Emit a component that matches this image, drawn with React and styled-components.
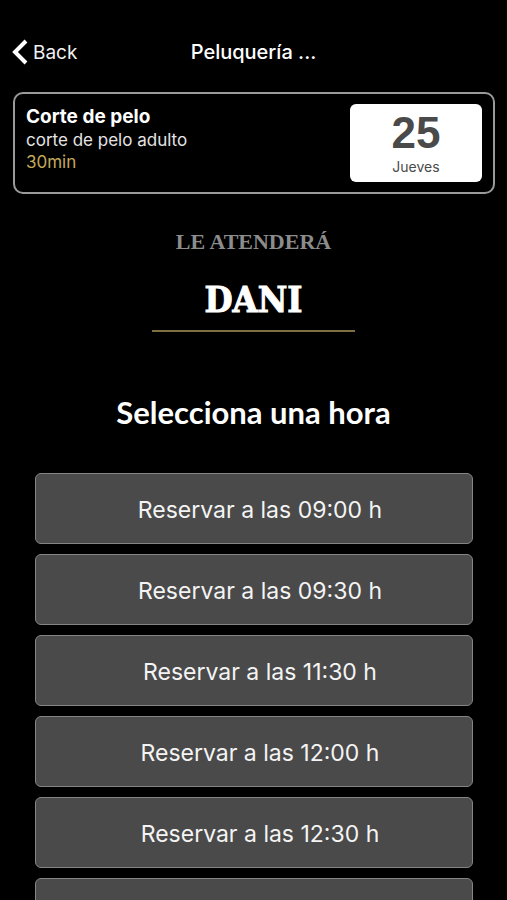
import React, { useState } from "react";
import styled, { createGlobalStyle } from "styled-components";

const hours = ["09:00", "09:30", "11:30", "12:00", "12:30", "13:00"];

const App = () => {
  const [selected, setSelected] = useState(null);

  return (
    <Screen>
      <GlobalStyle />
      <Header>
        <BackButton type="button">
          <BackIcon viewBox="0 0 16 26" aria-hidden="true">
            <path d="M14 2 L3 13 L14 24" />
          </BackIcon>
          Back
        </BackButton>
        <Title>Peluquería ...</Title>
      </Header>
      <ServiceCard>
        <div>
          <ServiceName>Corte de pelo</ServiceName>
          <ServiceText>corte de pelo adulto</ServiceText>
          <Duration>30min</Duration>
        </div>
        <DateBox>
          <DayNumber>25</DayNumber>
          <DayName>Jueves</DayName>
        </DateBox>
      </ServiceCard>
      <Attendant>
        <AttendantLabel>LE ATENDERÁ</AttendantLabel>
        <AttendantName>DANI</AttendantName>
      </Attendant>
      <Subtitle>Selecciona una hora</Subtitle>
      <HourList>
        {hours.map((hour) => {
          return (
            <HourButton
              key={hour}
              type="button"
              aria-pressed={selected === hour}
              $active={selected === hour}
              onClick={() => setSelected(hour)}
            >
              Reservar a las {hour} h
            </HourButton>
          );
        })}
      </HourList>
    </Screen>
  );
};

export default App;

const GlobalStyle = createGlobalStyle`
  * {
    box-sizing: border-box;
  }

  body {
    margin: 0;
    background: #000;
  }
`;

const Screen = styled.main`
  display: flex;
  flex-direction: column;
  height: 100vh;
  padding-top: 32px;
  overflow-y: auto;
  scrollbar-width: none;
  background: #000;
  color: #fff;
  font-family: Inter, "Liberation Sans", sans-serif;
`;

const Header = styled.header`
  display: grid;
  grid-template-columns: 1fr auto 1fr;
  align-items: center;
  flex-shrink: 0;
  height: 40px;
  padding: 0 12px;
`;

const BackButton = styled.button`
  display: flex;
  align-items: center;
  justify-self: start;
  gap: 5px;
  padding: 0;
  border: none;
  background: none;
  color: #f0f0f0;
  font-family: inherit;
  font-size: 19px;
`;

const BackIcon = styled.svg`
  width: 16px;
  height: 26px;
  fill: none;
  stroke: #fff;
  stroke-width: 4;
`;

const Title = styled.h1`
  margin: 0;
  font-size: 20px;
  font-weight: 500;
`;

const ServiceCard = styled.section`
  display: flex;
  justify-content: space-between;
  flex-shrink: 0;
  margin: 20px 12px 0 13px;
  padding: 10px 11px;
  border: 2px solid #9a9a9a;
  border-radius: 10px;
`;

const ServiceName = styled.h2`
  margin: 0;
  font-size: 19px;
  line-height: 25px;
  font-weight: 700;
`;

const ServiceText = styled.p`
  margin: 0;
  color: #e4e4e4;
  font-size: 17px;
  line-height: 22px;
`;

const Duration = styled(ServiceText)`
  color: #c4a95c;
`;

const DateBox = styled.div`
  display: flex;
  flex-direction: column;
  align-items: center;
  width: 132px;
  height: 78px;
  padding-top: 7px;
  border-radius: 6px;
  background: #fff;
  color: #4a4a4a;
`;

const DayNumber = styled.span`
  font-family: "Liberation Sans", sans-serif;
  font-size: 44px;
  line-height: 44px;
  font-weight: 700;
`;

const DayName = styled.span`
  font-size: 14px;
  line-height: 24px;
`;

const Attendant = styled.section`
  flex-shrink: 0;
  align-self: center;
  width: 40%;
  margin-top: 34px;
  border-bottom: 2px solid #7d6f42;
  text-align: center;
  white-space: nowrap;
`;

const AttendantLabel = styled.p`
  margin: 0;
  color: #8c8c8c;
  font-family: "Liberation Serif", serif;
  font-size: 22px;
  line-height: 28px;
  font-weight: 700;
`;

const AttendantName = styled.h2`
  margin: 20px 0 8px;
  font-family: "DejaVu Serif Condensed", "DejaVu Serif", serif;
  font-size: 36px;
  line-height: 46px;
  font-weight: 700;
  -webkit-text-stroke: 1px #fff;
`;

const Subtitle = styled.h2`
  flex-shrink: 0;
  margin: 61px 0 42px;
  font-family: Lato, "Open Sans", sans-serif;
  font-size: 31px;
  line-height: 38px;
  font-weight: 700;
  text-align: center;
`;

const HourList = styled.div`
  display: flex;
  flex-direction: column;
  gap: 10px;
  padding: 0 34px 20px 35px;
`;

const HourButton = styled.button`
  flex-shrink: 0;
  height: 71px;
  padding: 2px 0 0 12px;
  border: 1px solid #858585;
  border-radius: 6px;
  background: ${(props) => (props.$active ? "#6a6a6a" : "#4a4a4a")};
  color: #f4f4f4;
  font-family: inherit;
  font-size: 23px;
  line-height: 24px;
`;
